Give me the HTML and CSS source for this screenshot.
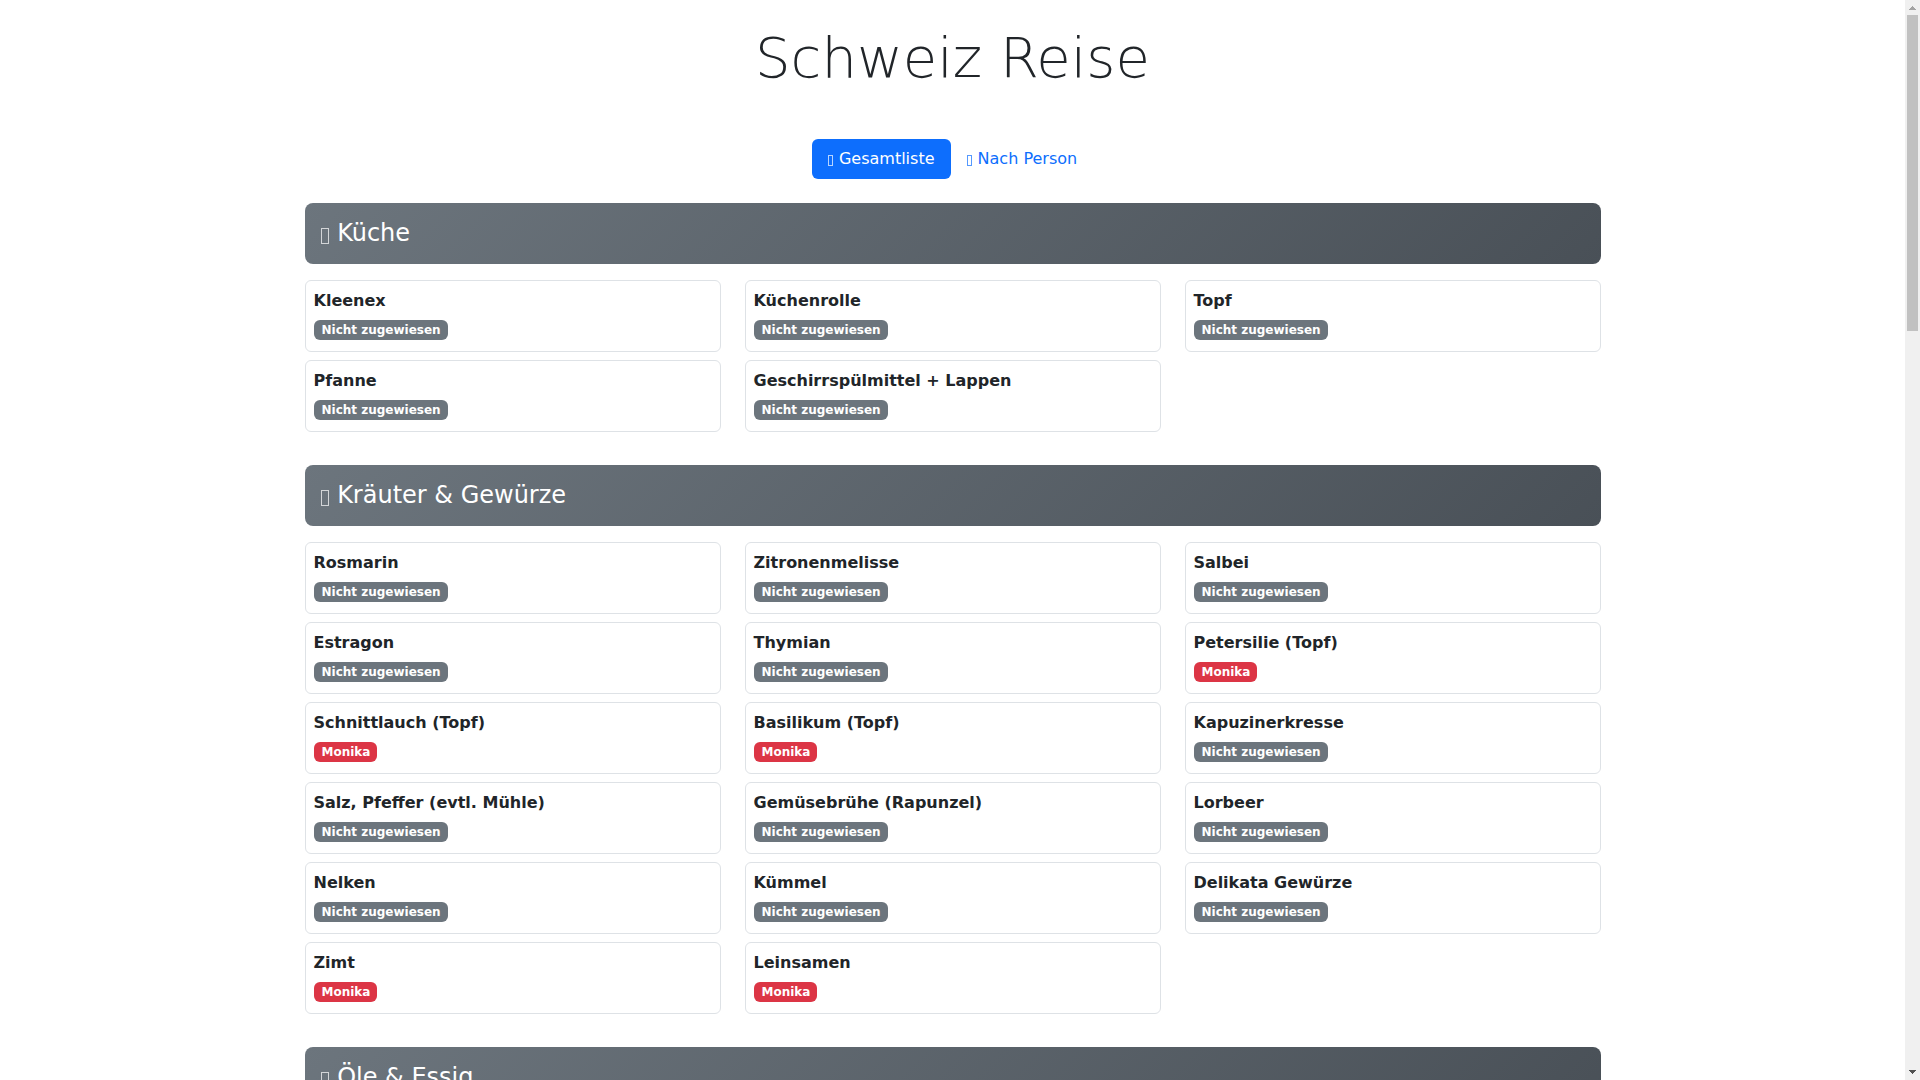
FILE: index.html
```html
<!DOCTYPE html>
<html lang="de">

<head>
    <meta charset="UTF-8">
    <meta name="viewport" content="width=device-width, initial-scale=1.0">
    <title>Schweiz Reise</title>

    <link rel="stylesheet" href="styles.css">
</head>

<body>

    <main class="page">
        <div class="container">
            <h1 class="title">Schweiz Reise</h1>

            <nav class="tabs">
                <button type="button" class="tab active"><span class="icon"></span> Gesamtliste</button>
                <button type="button" class="tab"><span class="icon"></span> Nach Person</button>
            </nav>

            <section class="category">
                <h4 class="category-header"><span class="icon icon-large"></span> Küche</h4>
                <div class="items">
                    <div class="item"><strong>Kleenex</strong><span class="badge">Nicht zugewiesen</span></div>
                    <div class="item"><strong>Küchenrolle</strong><span class="badge">Nicht zugewiesen</span></div>
                    <div class="item"><strong>Topf</strong><span class="badge">Nicht zugewiesen</span></div>
                    <div class="item"><strong>Pfanne</strong><span class="badge">Nicht zugewiesen</span></div>
                    <div class="item"><strong>Geschirrspülmittel + Lappen</strong><span class="badge">Nicht zugewiesen</span></div>
                </div>
            </section>

            <section class="category">
                <h4 class="category-header"><span class="icon icon-large"></span> Kräuter &amp; Gewürze</h4>
                <div class="items">
                    <div class="item"><strong>Rosmarin</strong><span class="badge">Nicht zugewiesen</span></div>
                    <div class="item"><strong>Zitronenmelisse</strong><span class="badge">Nicht zugewiesen</span></div>
                    <div class="item"><strong>Salbei</strong><span class="badge">Nicht zugewiesen</span></div>
                    <div class="item"><strong>Estragon</strong><span class="badge">Nicht zugewiesen</span></div>
                    <div class="item"><strong>Thymian</strong><span class="badge">Nicht zugewiesen</span></div>
                    <div class="item"><strong>Petersilie (Topf)</strong><span class="badge badge-monika">Monika</span></div>
                    <div class="item"><strong>Schnittlauch (Topf)</strong><span class="badge badge-monika">Monika</span></div>
                    <div class="item"><strong>Basilikum (Topf)</strong><span class="badge badge-monika">Monika</span></div>
                    <div class="item"><strong>Kapuzinerkresse</strong><span class="badge">Nicht zugewiesen</span></div>
                    <div class="item"><strong>Salz, Pfeffer (evtl. Mühle)</strong><span class="badge">Nicht zugewiesen</span></div>
                    <div class="item"><strong>Gemüsebrühe (Rapunzel)</strong><span class="badge">Nicht zugewiesen</span></div>
                    <div class="item"><strong>Lorbeer</strong><span class="badge">Nicht zugewiesen</span></div>
                    <div class="item"><strong>Nelken</strong><span class="badge">Nicht zugewiesen</span></div>
                    <div class="item"><strong>Kümmel</strong><span class="badge">Nicht zugewiesen</span></div>
                    <div class="item"><strong>Delikata Gewürze</strong><span class="badge">Nicht zugewiesen</span></div>
                    <div class="item"><strong>Zimt</strong><span class="badge badge-monika">Monika</span></div>
                    <div class="item"><strong>Leinsamen</strong><span class="badge badge-monika">Monika</span></div>
                </div>
            </section>

            <section class="category">
                <h4 class="category-header"><span class="icon icon-large"></span> Öle &amp; Essig</h4>
            </section>
        </div>
    </main>

    <div class="scrollbar" aria-hidden="true">
        <svg class="arrow arrow-up" viewBox="0 0 15 15" shape-rendering="crispEdges">
            <path d="M7 6h1v1h1v1h1v1h1v1H4V9h1V8h1V7h1z" />
        </svg>
        <div class="track">
            <div class="thumb"></div>
        </div>
        <svg class="arrow arrow-down" viewBox="0 0 15 15" shape-rendering="crispEdges">
            <path d="M4 5h7v1h-1v1H9v1H8v1H7V8H6V7H5V6H4z" />
        </svg>
    </div>

</body>

</html>
```

FILE: styles.css
```css
* {
    box-sizing: border-box;
}

body {
    margin: 0;
    height: 100vh;
    display: flex;
    overflow: hidden;
    background-color: #fff;
    color: #212529;
    font-family: "DejaVu Sans", sans-serif;
    font-size: 16px;
    line-height: 24px;
}

.page {
    flex: 1;
    overflow: hidden;
}

.container {
    max-width: 1320px;
    margin: 0 auto;
    padding: 24px 12px;
}

.title {
    margin: 0 0 48px;
    font-size: 56px;
    font-weight: 300;
    line-height: 67px;
    text-align: center;
}

.tabs {
    display: flex;
    justify-content: center;
    margin-bottom: 24px;
}

.tab {
    padding: 8px 16px;
    border: 0;
    border-radius: 6px;
    background: none;
    color: #0d6efd;
    font: inherit;
    cursor: pointer;
}

.tab.active {
    background-color: #0d6efd;
    color: #fff;
}

.icon {
    display: inline-block;
    width: 5px;
    height: 11px;
    margin-right: 1px;
    border: 1px solid currentColor;
    vertical-align: -2px;
    opacity: 0.7;
}

.icon-large {
    width: 8px;
    height: 16px;
    vertical-align: -3px;
}

.category {
    margin-bottom: 33px;
}

.category-header {
    margin: 0 0 16px;
    padding: 16px;
    border-radius: 8px;
    background: linear-gradient(135deg, #6c757d, #495057);
    color: #fff;
    font-size: 24px;
    font-weight: 500;
    line-height: 29px;
}

.items {
    display: grid;
    grid-template-columns: repeat(3, 1fr);
    gap: 8px 24px;
}

.item {
    display: flex;
    flex-direction: column;
    align-items: flex-start;
    gap: 7px;
    padding: 8px 8px 11px;
    border: 1px solid #dee2e6;
    border-radius: 6px;
}

.badge {
    padding: 4px 7px 4px 8px;
    border-radius: 6px;
    background-color: #6c757d;
    color: #fff;
    font-size: 12px;
    font-weight: 700;
    line-height: 12px;
}

.badge-monika {
    background-color: #dc3545;
}

.scrollbar {
    display: flex;
    flex-direction: column;
    width: 15px;
    background-color: #f0f0f0;
}

.arrow {
    width: 15px;
    height: 15px;
}

.arrow-up {
    fill: #a3a3a3;
}

.arrow-down {
    fill: #505050;
}

.track {
    flex: 1;
    padding: 0 2px;
}

.thumb {
    height: 316px;
    background-color: #c1c1c1;
}
```
